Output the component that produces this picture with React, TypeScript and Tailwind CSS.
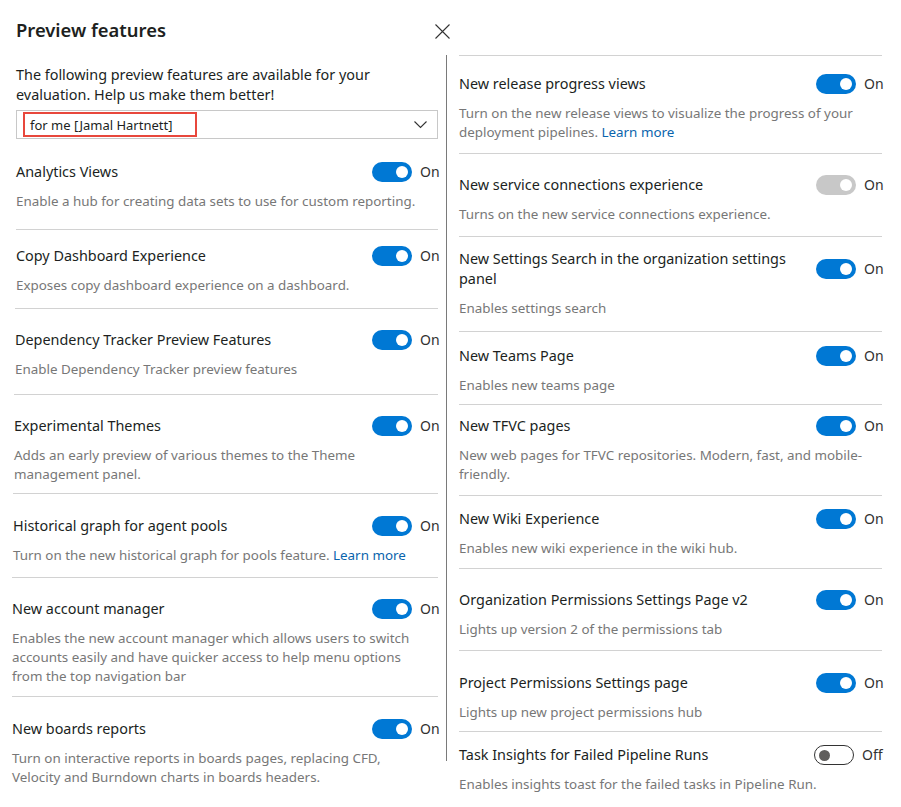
import React from "react";

type Feature = {
  title: string[];
  desc: string[];
  link?: boolean;
  state: "on" | "off" | "disabled";
  box: string;
  first?: boolean;
};

const left: Feature[] = [
  { title: ["Analytics Views"], desc: ["Enable a hub for creating data sets to use for custom reporting."], state: "on", box: "pt-[23px] pb-[18px]", first: true },
  { title: ["Copy Dashboard Experience"], desc: ["Exposes copy dashboard experience on a dashboard."], state: "on", box: "pt-[16px] pb-[13px]" },
  { title: ["Dependency Tracker Preview Features"], desc: ["Enable Dependency Tracker preview features"], state: "on", box: "pt-[21px] pb-[15px] -ml-[1px]" },
  { title: ["Experimental Themes"], desc: ["Adds an early preview of various themes to the Theme", "management panel."], state: "on", box: "pt-[21px] pb-[9px] -ml-[2px]" },
  { title: ["Historical graph for agent pools"], desc: ["Turn on the new historical graph for pools feature."], link: true, state: "on", box: "pt-[22px] pb-[12px] -ml-[3px]" },
  { title: ["New account manager"], desc: ["Enables the new account manager which allows users to switch", "accounts easily and have quicker access to help menu options", "from the top navigation bar"], state: "on", box: "pt-[21px] pb-[10px] -ml-[4px]" },
  { title: ["New boards reports"], desc: ["Turn on interactive reports in boards pages, replacing CFD,", "Velocity and Burndown charts in boards headers."], state: "on", box: "pt-[22px] pb-[10px] -ml-[4px]" },
];

const right: Feature[] = [
  { title: ["New release progress views"], desc: ["Turn on the new release views to visualize the progress of your", "deployment pipelines."], link: true, state: "on", box: "pt-[18px] pb-[11px]" },
  { title: ["New service connections experience"], desc: ["Turns on the new service connections experience."], state: "disabled", box: "pt-[21px] pb-[12px]" },
  { title: ["New Settings Search in the organization settings", "panel"], desc: ["Enables settings search"], state: "on", box: "pt-[12px] pb-[13px]" },
  { title: ["New Teams Page"], desc: ["Enables new teams page"], state: "on", box: "pt-[14px] pb-[9px]" },
  { title: ["New TFVC pages"], desc: ["New web pages for TFVC repositories. Modern, fast, and mobile-", "friendly."], state: "on", box: "pt-[11px] pb-[11px]" },
  { title: ["New Wiki Experience"], desc: ["Enables new wiki experience in the wiki hub."], state: "on", box: "pt-[13px] pb-[10px]" },
  { title: ["Organization Permissions Settings Page v2"], desc: ["Lights up version 2 of the permissions tab"], state: "on", box: "pt-[21px] pb-[11px]" },
  { title: ["Project Permissions Settings page"], desc: ["Lights up new project permissions hub"], state: "on", box: "pt-[22px] pb-[9px]" },
  { title: ["Task Insights for Failed Pipeline Runs"], desc: ["Enables insights toast for the failed tasks in Pipeline Run."], state: "off", box: "pt-[13px] pb-[10px]" },
];

const Toggle = ({ state }: { state: Feature["state"] }) => {
  if (state === "off") {
    return (
      <div className="flex items-center gap-2 h-[20px]">
        <div className="w-[40px] h-[20px] rounded-full border border-[#333] bg-white flex items-center pl-[4px]">
          <div className="w-[11px] h-[11px] rounded-full bg-[#605e5c]" />
        </div>
        <span className="text-[14px] leading-[20px] text-[#323130] w-[20px]">Off</span>
      </div>
    );
  }
  return (
    <div className="flex items-center gap-2 h-[20px]">
      <div
        className={
          state === "on"
            ? "w-[40px] h-[20px] rounded-full bg-[#0078d4] flex items-center justify-end pr-[4px]"
            : "w-[40px] h-[20px] rounded-full bg-[#c8c8c8] flex items-center justify-end pr-[4px]"
        }
      >
        <div className="w-[12px] h-[12px] rounded-full bg-white" />
      </div>
      <span className="text-[14px] leading-[20px] text-[#323130] w-[18px]">On</span>
    </div>
  );
};

const Item = ({ f }: { f: Feature }) => (
  <div className={(f.first ? "" : "border-t border-[#d2d2d2] ") + f.box}>
    <div className="flex items-center justify-between gap-3">
      <div className="text-[14.4px] leading-[20px] text-[#201f1e]">
        {f.title.map((t, i) => (
          <div key={i} className="whitespace-nowrap">{t}</div>
        ))}
      </div>
      <Toggle state={f.state} />
    </div>
    <div className="mt-[10px] text-[13.4px] leading-[19px] text-[#777]">
      {f.desc.map((d, i) => (
        <div key={i} className="whitespace-nowrap">
          {d}
          {f.link && i === f.desc.length - 1 && (
            <span className="text-[#0a64ad]"> Learn more</span>
          )}
        </div>
      ))}
    </div>
  </div>
);

export default function App() {
  return (
    <div className="w-[901px] h-[807px] bg-white overflow-hidden flex" style={{ fontFamily: '"Segoe UI", "Noto Sans", sans-serif' }}>
      <div className="w-[446px] pl-[16px] pr-[8px] pt-[16px] flex flex-col">
        <div className="flex items-center justify-between -mr-[12px] h-[28px]">
          <h1 className="text-[18.4px] leading-[28px] font-semibold text-[#201f1e]">Preview features</h1>
          <svg width="15" height="15" viewBox="0 0 15 15" className="mt-[2px]">
            <path d="M0.5 0.5 L14.5 14.5 M14.5 0.5 L0.5 14.5" stroke="#333" strokeWidth="1.1" fill="none" />
          </svg>
        </div>
        <p className="mt-[21px] text-[14.4px] leading-[20px] text-[#201f1e] whitespace-nowrap">
          The following preview features are available for your
          <br />
          evaluation. Help us make them better!
        </p>
        <div className="relative mt-[5px] h-[29px] border border-[#c8c8c8] flex items-center justify-between pl-[13px] pr-[10px]">
          <span className="text-[13px] leading-[20px] text-[#201f1e]">for me [Jamal Hartnett]</span>
          <svg width="13" height="8" viewBox="0 0 13 8">
            <path d="M0.5 0.5 L6.5 6.5 L12.5 0.5" stroke="#333" strokeWidth="1.1" fill="none" />
          </svg>
          <div className="absolute left-[6px] top-[1px] w-[174px] h-[25px] border-2 border-[#e8473c]" />
        </div>
        {left.map((f) => (
          <Item key={f.title[0]} f={f} />
        ))}
      </div>
      <div className="w-px h-[706px] mt-[55px] bg-[#7a7a7a]" />
      <div className="flex-1 pl-[12px] pr-[19px] pt-[55px] flex flex-col">
        {right.map((f) => (
          <Item key={f.title[0]} f={f} />
        ))}
      </div>
    </div>
  );
}
